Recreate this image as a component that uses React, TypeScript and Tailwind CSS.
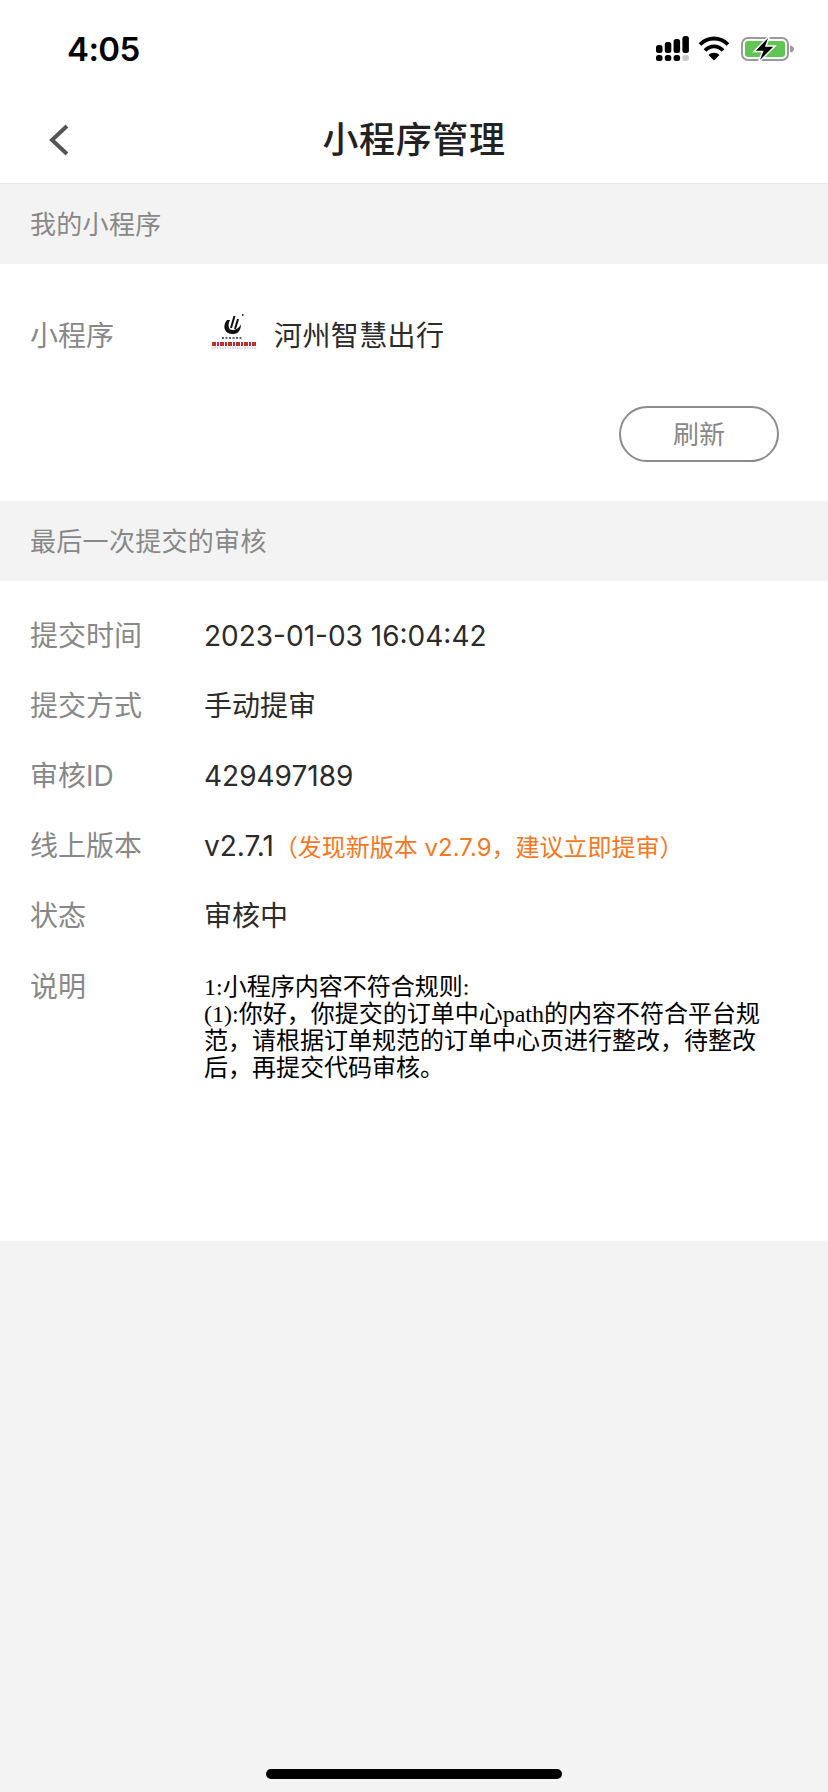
const sans = "font-['Inter','Noto_Sans_CJK_SC',sans-serif]";

function StatusIcons() {
  return (
    <svg width="140" height="30" viewBox="0 0 140 30" className="block">
      <g fill="#000">
        <rect x="0" y="11" width="6.500" height="8" rx="2.500" />
        <rect x="8.800" y="8" width="6.500" height="11" rx="2.500" />
        <rect x="17.600" y="5" width="6.500" height="14" rx="2.500" />
        <rect x="26.400" y="2" width="6.500" height="17" rx="2.500" />
        <rect x="0" y="21" width="6.500" height="6" rx="2.500" />
        <rect x="8.800" y="21" width="6.500" height="6" rx="2.500" />
        <rect x="17.600" y="21" width="6.500" height="6" rx="2.500" />
        <rect x="26.400" y="21" width="6.500" height="6" rx="2.500" fill="#c9c9c9" />
      </g>
      <g fill="none" stroke="#000" strokeWidth="3.800">
        <path d="M44 10.500 C52 2.500 64 2.500 72 10.500" />
        <path d="M49 16.500 C54 11 62 11 67 16.500" />
      </g>
      <path d="M52.500 21 C55.500 18 60.500 18 63.500 21 L58 26.500 Z" fill="#000" />
      <rect x="86" y="4" width="46" height="22" rx="6" fill="none" stroke="#9a9a9a" strokeWidth="2" />
      <rect x="89" y="7" width="40" height="16" rx="3" fill="#61c554" />
      <path d="M134 11.500 C137 12 138 13.500 138 15 C138 16.500 137 18 134 18.500 Z" fill="#9a9a9a" />
      <path d="M114 1 L98 17.500 H106.500 L102 29 L119 12 H110 Z" fill="#000" stroke="#fff" strokeWidth="1.500" />
    </svg>
  );
}

function Logo() {
  return (
    <svg width="50" height="40" viewBox="0 0 50 40" className="block -mt-[10px]">
      <path d="M24.500 5 L21 17 M28 8 L25 18" stroke="#111" strokeWidth="2" fill="none" />
      <path d="M17 9 C12 15 14 23 23 23 C29 23 31 18 31 13 C29 18 24 20 20 18.500 C18 16 18 13 20 9 Z" fill="#111" />
      <rect x="32" y="3" width="1.500" height="2" fill="#333" />
      <path d="M12 27 H33" stroke="#333" strokeWidth="1.500" strokeDasharray="2 1.500" />
      <path d="M2 33 H47" stroke="#b9302c" strokeWidth="4" strokeDasharray="4 1 2 1" />
      <path d="M2 37 H46" stroke="#d9a9a7" strokeWidth="1.200" strokeDasharray="1.500 1" />
    </svg>
  );
}

function Section({ children }: { children: string }) {
  return (
    <div className="h-20 flex items-center pl-[30px] bg-[#f3f3f3] text-[26px] tracking-[0.3px] text-[#888888]">{children}</div>
  );
}

function Row({ label, children }: { label: string; children: React.ReactNode }) {
  return (
    <div className="flex h-[70px] items-center">
      <div className="w-[174px] shrink-0 text-[28px] text-[#888888]">{label}</div>
      <div className="text-[28px] text-[#2b2b2b] whitespace-nowrap">{children}</div>
    </div>
  );
}

export default function App() {
  return (
    <div className={`w-[828px] h-[1792px] flex flex-col bg-[#f3f3f3] ${sans}`}>
      <div className="h-[88px] bg-white flex items-center justify-between pl-[67px] pr-[32px] pt-[10px]">
        <div className="text-[33px] font-semibold text-black tracking-[-0.6px] pt-[2px]">4:05</div>
        <StatusIcons />
      </div>
      <div className="relative h-[96px] bg-white border-b border-[#ebebeb] flex items-center justify-center pt-[8px]">
        <svg width="22" height="34" viewBox="0 0 22 34" className="absolute left-[48px] top-[35px]">
          <path d="M19 3 L4 17 L19 31" fill="none" stroke="#555555" strokeWidth="4" />
        </svg>
        <div className="text-[36px] font-medium text-[#222222] tracking-[0.6px]">小程序管理</div>
      </div>
      <Section>我的小程序</Section>
      <div className="h-[237px] bg-white flex flex-col pl-[30px] pr-[49px]">
        <div className="flex items-center h-[72px] mt-[36px]">
          <div className="w-[180px] shrink-0 text-[28px] text-[#888888]">小程序</div>
          <Logo />
          <div className="ml-[14px] text-[28px] tracking-[0.4px] text-[#2b2b2b]">河州智慧出行</div>
        </div>
        <div className="flex justify-end mt-[34px]">
          <div className="w-[160px] h-[56px] rounded-full border-2 border-[#8c8c8c] flex items-center justify-center text-[26px] text-[#888888]">刷新</div>
        </div>
      </div>
      <Section>最后一次提交的审核</Section>
      <div className="h-[660px] bg-white pl-[30px] pr-[60px] pt-[20px] flex flex-col">
        <Row label="提交时间">2023-01-03 16:04:42</Row>
        <Row label="提交方式">手动提审</Row>
        <Row label="审核ID">429497189</Row>
        <Row label="线上版本">
          v2.7.1<span className="text-[24px] text-[#f5781e]">（发现新版本 v2.7.9，建议立即提审）</span>
        </Row>
        <Row label="状态">审核中</Row>
        <div className="flex mt-[15px]">
          <div className="w-[174px] shrink-0 text-[28px] text-[#888888]">说明</div>
          <div className="w-[560px] mt-[8px] text-[24px] leading-[27px] text-black font-['Liberation_Serif','Noto_Sans_CJK_SC',serif]">
            1:小程序内容不符合规则:
            <br />
            (1):你好，你提交的订单中心path的内容不符合平台规范，请根据订单规范的订单中心页进行整改，待整改后，再提交代码审核。
          </div>
        </div>
      </div>
      <div className="mt-auto mb-[13px] mx-auto w-[296px] h-[10px] rounded-full bg-black" />
    </div>
  );
}
